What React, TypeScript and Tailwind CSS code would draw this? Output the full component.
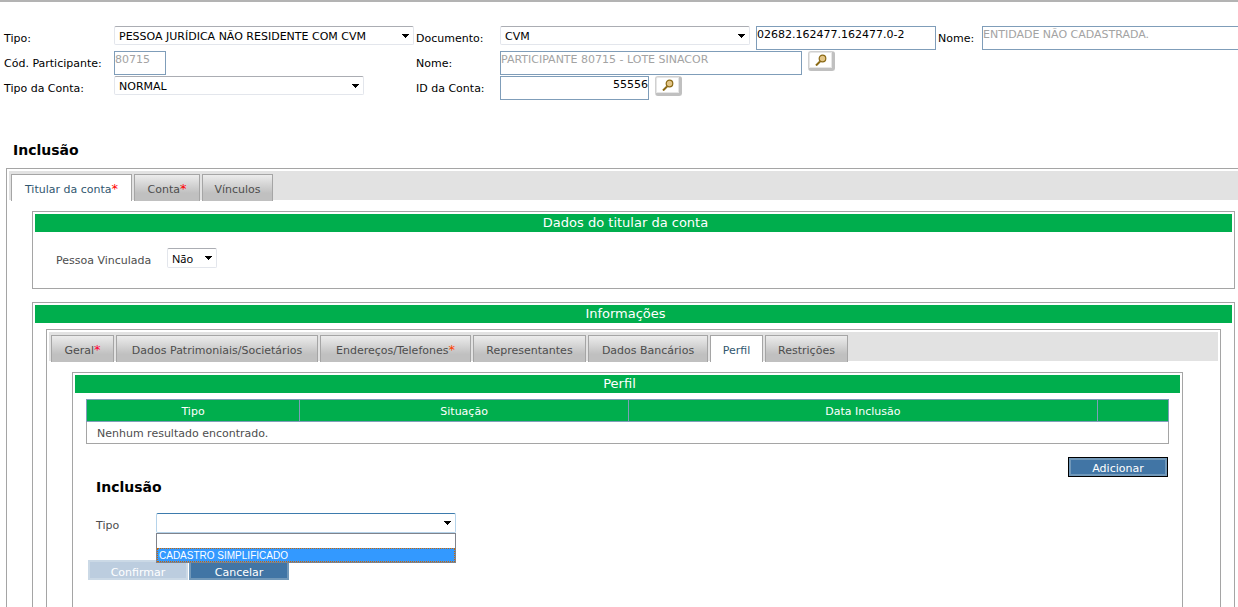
import type { ReactNode } from "react";

type Tab = { label: string; width: string; mark?: string; active?: boolean };

const outerTabs: Tab[] = [
  { label: "Titular da conta", width: "w-[121px]", mark: "text-[#ff0000]", active: true },
  { label: "Conta", width: "w-[66px]", mark: "text-[#ff0000]" },
  { label: "Vínculos", width: "w-[71px]" },
];

const innerTabs: Tab[] = [
  { label: "Geral", width: "w-[63px]", mark: "text-[#ff0033]" },
  { label: "Dados Patrimoniais/Societários", width: "w-[202px]" },
  { label: "Endereços/Telefones", width: "w-[151px]", mark: "text-[#ff4000]" },
  { label: "Representantes", width: "w-[113px]" },
  { label: "Dados Bancários", width: "w-[120px]" },
  { label: "Perfil", width: "w-[53px]", active: true },
  { label: "Restrições", width: "w-[83px]" },
];

function Tabs({ items }: { items: Tab[] }) {
  return (
    <div role="tablist" className="flex h-[29px] gap-[2px] bg-[#e2e2e2] pt-[3px] pl-[2px]">
      {items.map((tab) => (
        <button
          key={tab.label}
          type="button"
          role="tab"
          aria-selected={!!tab.active}
          className={`h-[27px] shrink-0 border border-b-0 border-[#a5a5a5] pt-1 leading-4 whitespace-nowrap ${tab.width} ${
            tab.active ? "bg-white text-[#31576f]" : "bg-linear-to-b from-[#ececec] to-[#c0c0c0] to-70% text-[#4d4d4d]"
          }`}
        >
          {tab.label}
          {tab.mark && <span className={`text-[13px] leading-none ${tab.mark}`}>*</span>}
        </button>
      ))}
    </div>
  );
}

function Panel({ title, className, children }: { title: string; className: string; children: ReactNode }) {
  return (
    <section className={`border border-[#a5a5a5] p-[2px] ${className}`}>
      <h2 className="h-[18px] bg-[#00ae4d] pr-4 text-center text-[13px] leading-[18px] text-white">{title}</h2>
      {children}
    </section>
  );
}

function Select({ id, value, className }: { id: string; value: string; className: string }) {
  return (
    <div className={`relative ${className}`}>
      <select
        id={id}
        defaultValue={value}
        className="block h-full w-full appearance-none rounded-[2px] border border-inherit bg-white pt-[2px] pl-1 text-black outline-none"
      >
        <option>{value}</option>
      </select>
      <svg className="pointer-events-none absolute top-1/2 right-[5px] -mt-[2px] h-1 w-[7px]" viewBox="0 0 7 4" shapeRendering="crispEdges">
        <path d="M0 0h7v1h-1v1h-1v1h-1v1h-1v-1h-1v-1h-1v-1h-1z" fill="#000" />
      </svg>
    </div>
  );
}

const selectBorder = "border-[#e3e6ec] border-t-[#abadb3]";
const field = "h-6 border border-[#7f9db9] bg-white pb-2 outline-none disabled:text-[#a3a3a3]";
const label = "shrink-0 leading-[26px]";

function SearchButton({ label }: { label: string }) {
  return (
    <button
      type="button"
      aria-label={label}
      className="flex h-5 w-[27px] shrink-0 items-start justify-center rounded-[3px] border border-r-[3px] border-b-[3px] border-[#d0d0d0] border-r-[#c0c0c0] border-b-[#c0c0c0] bg-white pt-[2px] inset-ring inset-ring-[#e6e6e6]"
    >
      <svg width="12" height="12" viewBox="0 0 12 12">
        <path d="M1 11.5 5 7.5" stroke="#8a6914" strokeWidth="2" />
        <circle cx="7.5" cy="4.5" r="3.3" fill="#e3c586" stroke="#8a6914" strokeWidth="1.2" />
      </svg>
    </button>
  );
}

export default function App() {
  return (
    <div className="h-screen overflow-hidden border-t-2 border-[#b3b3b3] bg-white text-[11px] text-[#4d4d4d] [font-family:Verdana,'DejaVu_Sans',sans-serif]">
      <form className="flex flex-col gap-px pt-6 pl-1 text-black">
        <div className="flex h-6 items-start">
          <label htmlFor="tipo" className={`w-[110px] ${label}`}>Tipo:</label>
          <div className="w-[302px] shrink-0">
            <Select id="tipo" value="PESSOA JURÍDICA NÃO RESIDENTE COM CVM" className={`h-[19px] w-[300px] ${selectBorder}`} />
          </div>
          <label htmlFor="documento" className={`w-[84px] ${label}`}>Documento:</label>
          <Select id="documento" value="CVM" className={`mr-[6px] h-[19px] w-[250px] shrink-0 ${selectBorder}`} />
          <input aria-label="Número do documento" defaultValue="02682.162477.162477.0-2" className={`mr-[2px] w-[180px] shrink-0 ${field}`} />
          <label htmlFor="entidade" className={`w-11 ${label}`}>Nome:</label>
          <input id="entidade" disabled defaultValue="ENTIDADE NÃO CADASTRADA." className={`min-w-0 flex-1 border-r-0 ${field}`} />
        </div>
        <div className="flex h-6 items-start">
          <label htmlFor="participante" className={`w-[110px] ${label}`}>Cód. Participante:</label>
          <div className="w-[302px] shrink-0">
            <input id="participante" disabled defaultValue="80715" className={`block w-[52px] ${field}`} />
          </div>
          <label htmlFor="nome" className={`w-[84px] ${label}`}>Nome:</label>
          <input id="nome" disabled defaultValue="PARTICIPANTE 80715 - LOTE SINACOR" className={`mr-[6px] w-[302px] shrink-0 ${field}`} />
          <SearchButton label="Buscar participante" />
        </div>
        <div className="flex h-6 items-start">
          <label htmlFor="tipo-conta" className={`w-[110px] ${label}`}>Tipo da Conta:</label>
          <div className="w-[302px] shrink-0">
            <Select id="tipo-conta" value="NORMAL" className={`h-[19px] w-[250px] ${selectBorder}`} />
          </div>
          <label htmlFor="id-conta" className={`w-[84px] ${label}`}>ID da Conta:</label>
          <input id="id-conta" defaultValue="55556" className={`mr-[6px] w-[149px] shrink-0 text-right ${field}`} />
          <SearchButton label="Buscar conta" />
        </div>
      </form>

      <h1 className="mt-10 ml-[13px] text-[14px] leading-5 font-bold text-black">Inclusão</h1>

      <div className="mt-2 ml-[6px] border-t border-l border-[#a5a5a5] pt-[2px] pl-[2px]">
        <Tabs items={outerTabs} />
        <div className="mt-[11px] mr-[3px] ml-[23px]">
          <Panel title="Dados do titular da conta" className="h-[78px]">
            <div className="mt-4 ml-[21px] flex items-start">
              <label htmlFor="vinculada" className={`w-[111px] ${label}`}>Pessoa Vinculada</label>
              <Select id="vinculada" value="Não" className={`h-5 w-[50px] [font-family:Tahoma,'Noto_Sans',sans-serif] ${selectBorder}`} />
            </div>
          </Panel>

          <Panel title="Informações" className="mt-[13px] pb-24">
            <div className="mt-[6px] mr-[11px] ml-[11px] border border-[#a5a5a5] p-[2px] pb-24">
              <Tabs items={innerTabs} />
              <Panel title="Perfil" className="mt-[11px] mr-[35px] ml-[23px] pb-24">
                <div className="mt-[6px] mr-[11px] ml-[11px]">
                  <table className="w-full table-fixed border-collapse border border-[#a5a5a5] leading-4">
                    <colgroup>
                      <col className="w-[19.7%]" />
                      <col className="w-[30.4%]" />
                      <col className="w-[43.3%]" />
                      <col className="w-[6.6%]" />
                    </colgroup>
                    <thead>
                      <tr className="h-[22px] bg-[#00ae4d] text-white">
                        <th className="border border-[#7f9db9] p-0 pt-[3px] font-normal">Tipo</th>
                        <th className="border border-[#7f9db9] p-0 pt-[3px] font-normal">Situação</th>
                        <th className="border border-[#7f9db9] p-0 pt-[3px] font-normal">Data Inclusão</th>
                        <th className="border border-[#7f9db9] p-0" />
                      </tr>
                    </thead>
                    <tbody>
                      <tr className="h-[22px]">
                        <td colSpan={4} className="border border-[#a5a5a5] px-[10px] pt-[3px] pb-0">Nenhum resultado encontrado.</td>
                      </tr>
                    </tbody>
                  </table>

                  <div className="mt-[13px] mr-px flex justify-end">
                    <button type="button" className="h-5 w-[100px] border border-black bg-[#4175a5] pt-[3px] text-white inset-ring-2 inset-ring-[#7198b9]">
                      Adicionar
                    </button>
                  </div>

                  <h3 className="ml-[10px] text-[14px] leading-5 font-bold text-black">Inclusão</h3>

                  <div className="mt-4 ml-[10px] flex items-start">
                    <label htmlFor="perfil-tipo" className={`w-[60px] ${label}`}>Tipo</label>
                    <div className="relative">
                      <Select id="perfil-tipo" value="" className="h-5 w-[300px] border-[#b5d3ea] border-t-[#3d7bad]" />
                      <ul role="listbox" aria-label="Tipo" className="absolute top-5 left-0 z-10 w-full border border-[#7f838c] bg-white text-[10px] leading-[13px] [font-family:'Liberation_Sans',Arial,sans-serif]">
                        <li role="option" aria-selected={false} className="h-[14px]" />
                        <li role="option" aria-selected className="h-[14px] border border-dotted border-[#cc6600] bg-[#3399ff] pl-px text-white">
                          CADASTRO SIMPLIFICADO
                        </li>
                      </ul>
                    </div>
                  </div>

                  <div className="mt-[21px] ml-[2px] flex gap-px">
                    <button type="button" disabled className="h-5 w-[100px] border-2 border-[#cbd9e6] bg-[#bccddf] pt-1 leading-[13px] text-white">
                      Confirmar
                    </button>
                    <button type="button" className="h-5 w-[100px] border-2 border-[#7198b9] bg-[#4175a5] pt-1 leading-[13px] text-white">
                      Cancelar
                    </button>
                  </div>
                </div>
              </Panel>
            </div>
          </Panel>
        </div>
      </div>
    </div>
  );
}
